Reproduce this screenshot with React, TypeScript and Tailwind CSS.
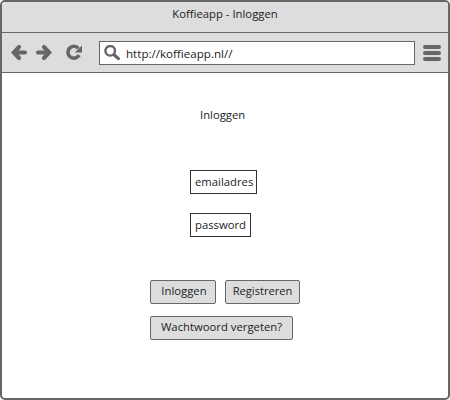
import React from "react";

function ArrowLeft({ className = "" }: { className?: string }) {
  return (
    <svg className={className} width="17" height="17" viewBox="0 0 17 17" fill="none" stroke="#666">
      <path d="M8 3L2.9 8.5L8 14" strokeLinejoin="miter" strokeLinecap="round" strokeWidth="4.2" />
      <path d="M4 8.5H14" strokeLinecap="round" strokeWidth="4" />
    </svg>
  );
}

function Reload() {
  return (
    <svg width="17" height="17" viewBox="0 0 17 17">
      <path d="M12.4 4.2A6 6 0 1 0 13.2 11.2" fill="none" stroke="#666" strokeWidth="3.6" />
      <path d="M16 1.5V8.5H8.8Z" fill="#666" />
    </svg>
  );
}

function Search() {
  return (
    <svg className="shrink-0" width="17" height="17" viewBox="0 0 17 17" fill="none" stroke="#666">
      <circle cx="6.2" cy="5.8" r="4.8" strokeWidth="2.4" />
      <path d="M10 9.8L14.4 13.6" strokeWidth="3.2" strokeLinecap="round" />
    </svg>
  );
}

function Button({ children, className = "" }: { children: React.ReactNode; className?: string }) {
  return (
    <button className={`h-6 rounded-[2px] border border-[#666] bg-[#ddd] pb-[2px] text-center whitespace-nowrap ${className}`}>
      {children}
    </button>
  );
}

export default function App() {
  return (
    <div className="flex h-[400px] w-[450px] flex-col overflow-hidden rounded-[5px] border-2 border-[#666] bg-white font-['Open_Sans','Noto_Sans',sans-serif] text-[11.3px] leading-4 text-[#222]">
      <header className="h-[31px] shrink-0 border-b border-[#666] bg-[#ddd] pt-1 text-center">
        Koffieapp - Inloggen
      </header>
      <nav className="flex h-10 shrink-0 items-start border-b border-[#666] bg-[#ddd] pt-2 pl-[9px]">
        <div className="flex pt-[3px]">
          <ArrowLeft />
          <ArrowLeft className="ml-[7px] rotate-180" />
          <div className="ml-[14px]">
            <Reload />
          </div>
        </div>
        <div className="ml-4 flex h-6 w-[316px] items-center border border-[#666] bg-white pl-1">
          <Search />
          <span className="ml-[5px] pt-px text-[11.6px]">http://koffieapp.nl//</span>
        </div>
        <div className="ml-2 flex flex-col gap-[2px] pt-1">
          <div className="h-1 w-[18px] rounded-[2px] bg-[#666]" />
          <div className="h-1 w-[18px] rounded-[2px] bg-[#666]" />
          <div className="h-1 w-[18px] rounded-[2px] bg-[#666]" />
        </div>
      </nav>
      <main className="flex flex-col pt-[34px]">
        <h1 className="pl-[198px]">Inloggen</h1>
        <div className="mt-[47px] ml-[188px] flex h-6 w-[67px] items-center border border-[#333] pl-1">emailadres</div>
        <div className="mt-[19px] ml-[188px] flex h-6 w-[61px] items-center border border-[#333] pl-1">password</div>
        <div className="mt-[43px] ml-[148px] flex gap-[9px]">
          <Button className="w-[66px] pl-[2px]">Inloggen</Button>
          <Button className="w-[75px] text-[11.1px]">Registreren</Button>
        </div>
        <Button className="mt-3 ml-[148px] w-[143px]">Wachtwoord vergeten?</Button>
      </main>
    </div>
  );
}
